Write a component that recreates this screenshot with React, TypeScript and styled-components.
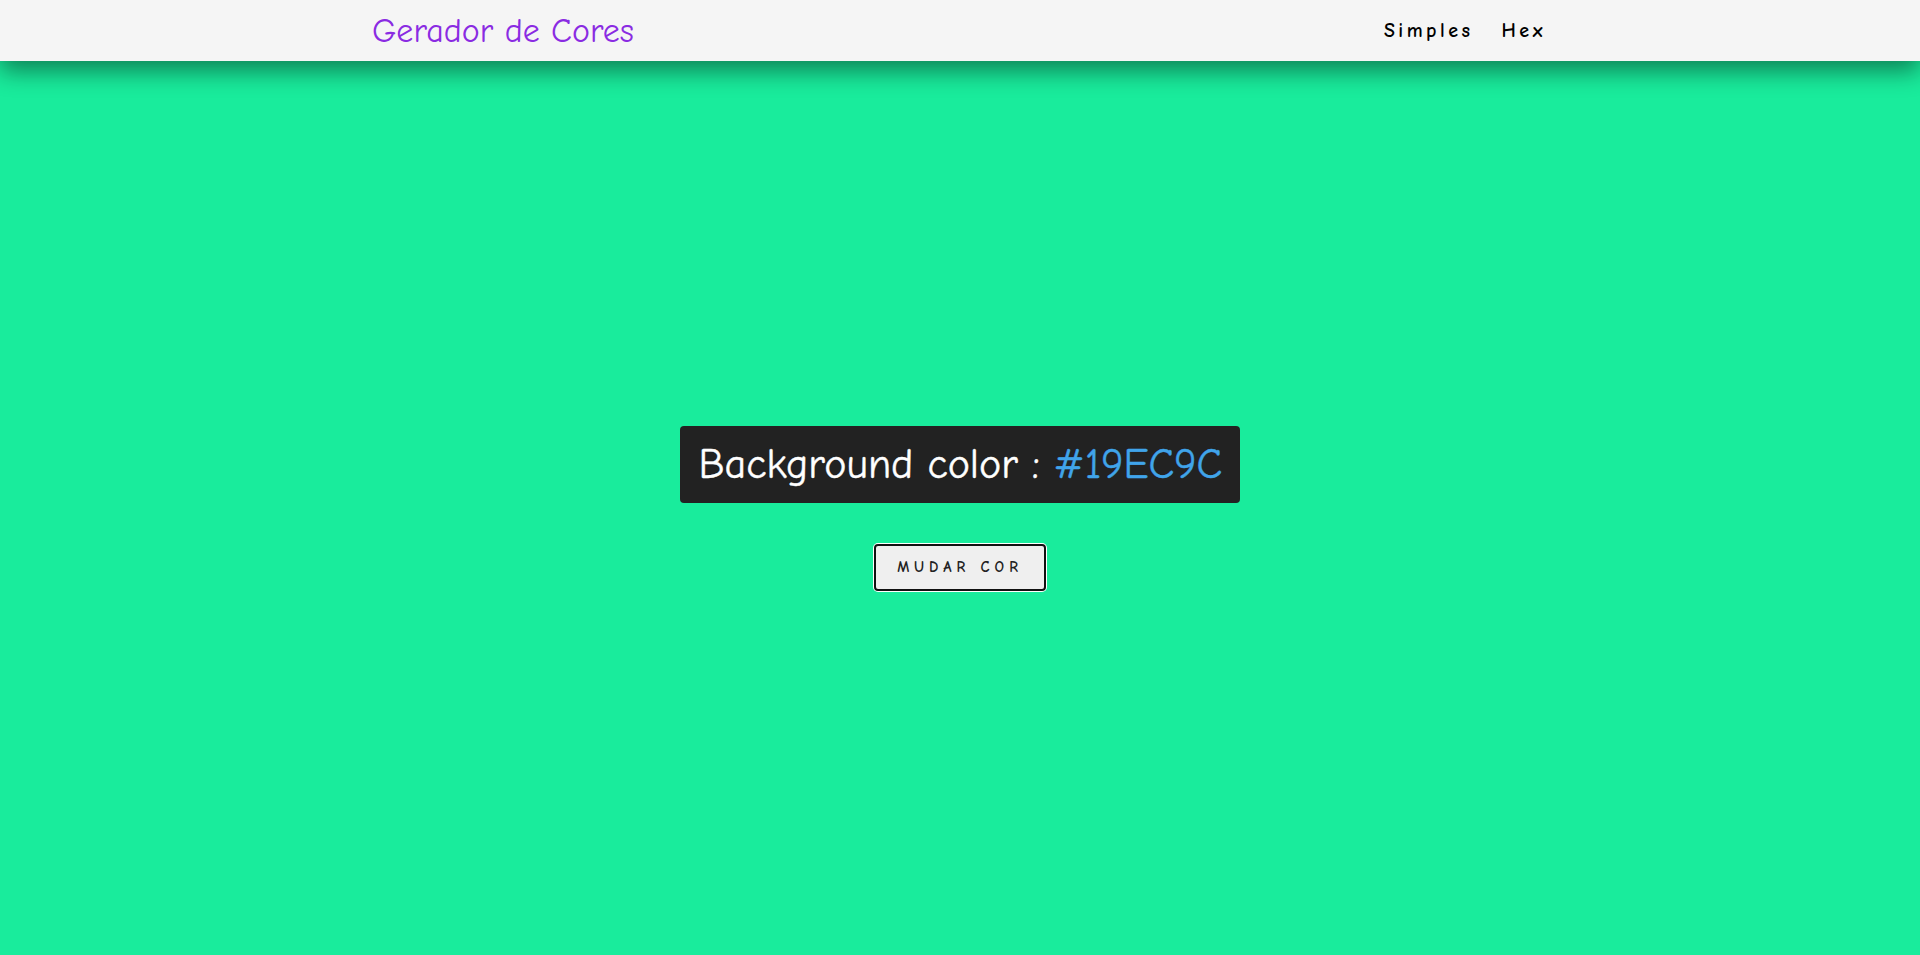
import React, { ReactElement } from 'react';
import styled, { createGlobalStyle } from 'styled-components';

const hex = '#19EC9C';

const GlobalStyle = createGlobalStyle`
  html, body {
    margin: 0;
    padding: 0;
    height: 100%;
  }
  body {
    font-family: "Comic Sans MS", "Comic Neue", cursive, sans-serif;
    background-color: ${hex};
  }
  #root {
    min-height: 100vh;
    display: flex;
    flex-direction: column;
  }
`;

const App = (): ReactElement => {
  return (
    <>
      <GlobalStyle />
      <Nav>
        <NavInner>
          <Brand>Gerador de Cores</Brand>
          <Links>
            <NavLink>Simples</NavLink>
            <NavLink>Hex</NavLink>
          </Links>
        </NavInner>
      </Nav>
      <Main>
        <ColorBox>
          Background color : <HexText>{hex}</HexText>
        </ColorBox>
        <ChangeButton>mudar cor</ChangeButton>
      </Main>
    </>
  );
};

const Nav = styled.nav`
  height: 61px;
  background-color: #f5f5f5;
  box-shadow: 0 10px 25px rgba(0, 0, 0, 0.45);
  position: relative;
  z-index: 10;
`;

const NavInner = styled.div`
  width: 1200px;
  height: 100%;
  margin: 0 auto;
  padding: 0 14px 0 12px;
  box-sizing: border-box;
  display: flex;
  align-items: center;
  justify-content: space-between;
`;

const Brand = styled.h3`
  margin: 0;
  font-size: 34px;
  font-weight: 400;
  color: #8a2be2;
`;

const Links = styled.ul`
  list-style: none;
  margin: 0;
  padding: 0;
  display: flex;
  gap: 28px;
`;

const NavLink = styled.li`
  font-size: 20px;
  font-weight: 700;
  letter-spacing: 3.5px;
  color: #000;
  cursor: pointer;
`;

const Main = styled.main`
  flex: 1;
  display: flex;
  flex-direction: column;
  align-items: center;
  justify-content: center;
  gap: 41px;
`;

const ColorBox = styled.h2`
  margin: 0;
  padding: 0 18px 0 19px;
  height: 77px;
  display: flex;
  align-items: center;
  background-color: #222;
  border-radius: 4px;
  color: #fff;
  font-size: 42px;
  font-weight: 400;
  white-space: pre;
  -webkit-text-stroke: 0.4px currentColor;
`;

const HexText = styled.span`
  color: #40a4ea;
`;

const ChangeButton = styled.button`
  width: 172px;
  height: 47px;
  font-family: inherit;
  font-size: 15px;
  font-weight: 700;
  letter-spacing: 5px;
  text-transform: uppercase;
  color: #222;
  background-color: #efefef;
  border: 2px solid #111;
  border-radius: 4px;
  box-shadow: 0 0 0 1px #fff;
  cursor: pointer;
`;

export default App;
